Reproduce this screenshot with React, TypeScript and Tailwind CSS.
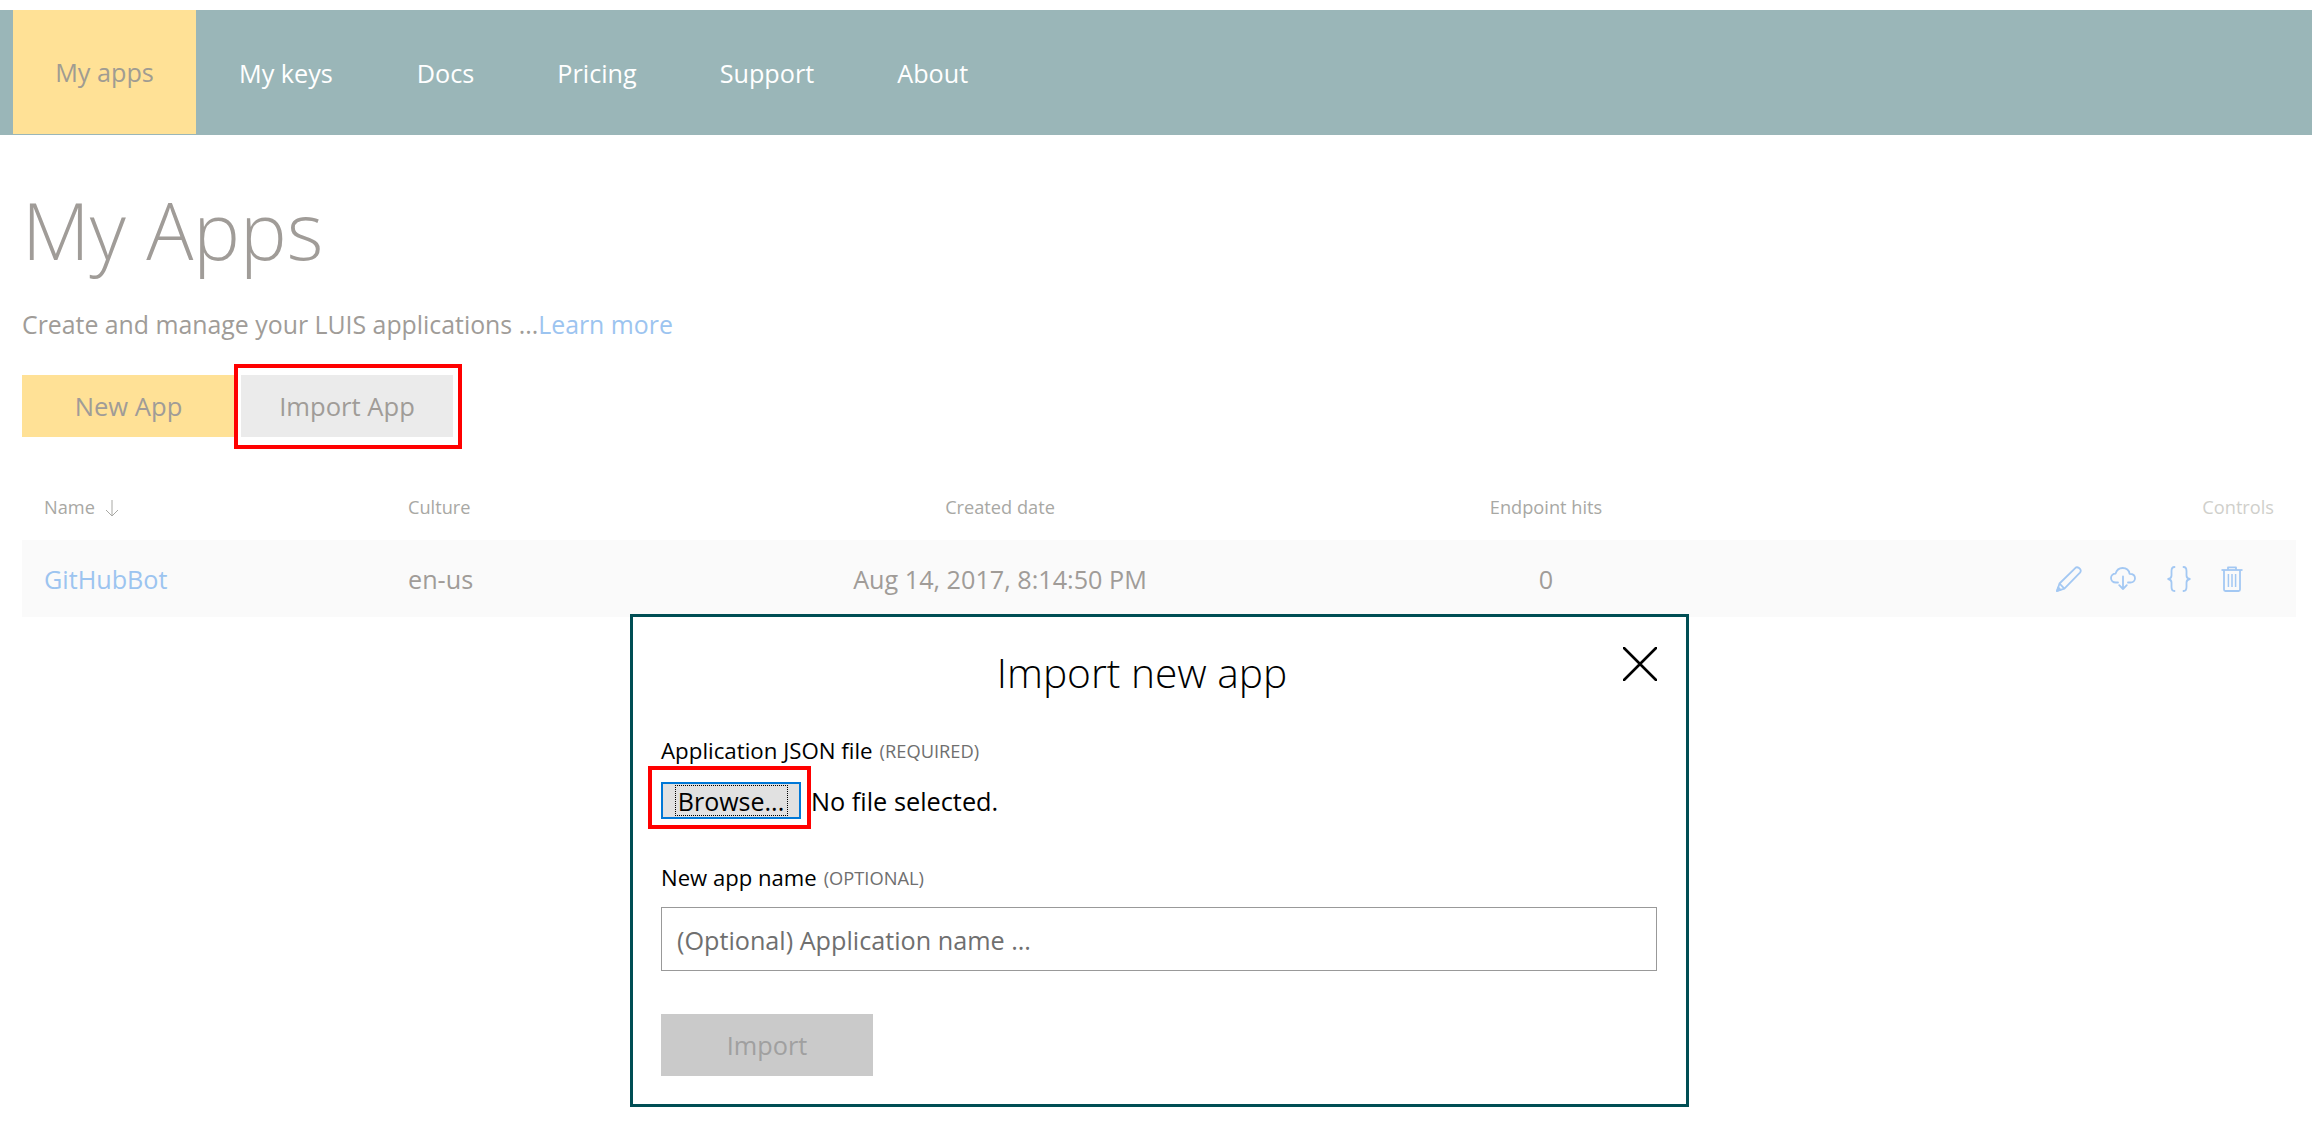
const sans = { fontFamily: '"Open Sans", sans-serif' };

function Pencil() {
  return (
    <svg width="26" height="26" viewBox="0 0 26 26" fill="none" stroke="#a3c8f3" strokeWidth="1.8" strokeLinejoin="round">
      <path d="M1 25 L3.5 17.5 L19.5 1.8 Q21 0.6 23 2 L24.2 3.2 Q25.4 5 24 6.6 L8.4 22.6 Z" />
      <path d="M3.5 17.5 L8.4 22.6" />
      <path d="M1 25 L2.2 21.4 L4.6 23.8 Z" fill="#a3c8f3" />
    </svg>
  );
}
function Cloud() {
  return (
    <svg width="26" height="24" viewBox="0 0 26 24" fill="none" stroke="#a3c8f3" strokeWidth="1.8" strokeLinecap="round" strokeLinejoin="round">
      <path d="M8 15.5 H6 C3 15.5 1 13.6 1 11 C1 8.4 3 6.6 5.6 6.6 C6.6 3.2 9.4 1 12.6 1 C16.2 1 19 3.4 19.6 6.8 C22.6 6.8 25 8.4 25 11.2 C25 13.8 23 15.5 20.4 15.5 H18" />
      <path d="M13 9.5 V22 M9.2 18.2 L13 22 L16.8 18.2" />
    </svg>
  );
}
function Braces() {
  return (
    <svg width="24" height="26" viewBox="0 0 24 26" fill="none" stroke="#a3c8f3" strokeWidth="1.8" strokeLinecap="round" strokeLinejoin="round">
      <path d="M7.5 1 C4.5 1 4.5 3 4.5 5 V9.5 C4.5 11.5 3.5 12.6 1.2 13 C3.5 13.4 4.5 14.5 4.5 16.5 V21 C4.5 23 4.5 25 7.5 25" />
      <path d="M16.5 1 C19.5 1 19.5 3 19.5 5 V9.5 C19.5 11.5 20.5 12.6 22.8 13 C20.5 13.4 19.5 14.5 19.5 16.5 V21 C19.5 23 19.5 25 16.5 25" />
    </svg>
  );
}
function Trash() {
  return (
    <svg width="22" height="26" viewBox="0 0 22 26" fill="none" stroke="#a3c8f3" strokeWidth="1.8" strokeLinejoin="round">
      <path d="M0.5 4 H21.5" />
      <path d="M7 4 V1.4 H15 V4" />
      <path d="M3 4 V23.6 Q3 25 4.4 25 H17.6 Q19 25 19 23.6 V4" />
      <path d="M7.4 8 V21 M11 8 V21 M14.6 8 V21" strokeWidth="1.5" />
    </svg>
  );
}

const columns = "grid grid-cols-[386px_392px_400px_692px_404px] items-center";

export default function App() {
  return (
    <div className="relative h-[1124px] w-[2312px] overflow-hidden bg-white pt-[10px]" style={sans}>
      <nav className="flex h-[125px] items-stretch bg-[#9ab6b8] pl-[13px] text-[25.2px] text-white">
        <a className="mb-[1px] flex w-[183px] items-center justify-center bg-[#ffe196] pt-[2px] text-[#a09c92]">My apps</a>
        <a className="ml-[43px] flex items-center pt-[2px]">My keys</a>
        <a className="ml-[84px] flex items-center pt-[2px]">Docs</a>
        <a className="ml-[83px] flex items-center pt-[2px]">Pricing</a>
        <a className="ml-[83px] flex items-center pt-[2px]">Support</a>
        <a className="ml-[83px] flex items-center pt-[2px]">About</a>
      </nav>

      <main className="px-[16px]">
        <h1 className="ml-[6px] mt-[40px] h-[110px] text-[78.5px] font-light leading-[110px] text-[#a09c98]">My Apps</h1>
        <p className="ml-[6px] mt-[21px] h-[36px] text-[24.85px] leading-[36px] text-[#a09c98]">
          Create and manage your LUIS applications ...<span className="text-[#9cc4f0]">Learn more</span>
        </p>

        <div className="relative ml-[6px] mt-[33px] flex h-[62px] items-stretch text-[25.6px] text-[#a09c98]">
          <button className="w-[213px] bg-[#ffe196] pt-[2px]">New App</button>
          <button className="ml-[6px] w-[212px] bg-[#ebebeb] pt-[2px]">Import App</button>
          <div className="absolute left-[212px] top-[-11px] h-[85px] w-[228px] border-4 border-[#ff0000]" />
        </div>

        <div className={`ml-[6px] mt-[56px] h-[30px] w-[2274px] text-[18.2px] text-[#a8a8a4] ${columns}`}>
          <div className="flex items-center gap-[10px] pl-[22px]">
            Name
            <svg width="14" height="18" viewBox="0 0 14 18" fill="none" stroke="#a8a8a4" strokeWidth="1">
              <path d="M7 1 V17 M1 11 L7 17 L13 11" />
            </svg>
          </div>
          <div>Culture</div>
          <div className="text-center">Created date</div>
          <div className="text-center">Endpoint hits</div>
          <div className="pr-[22px] text-right text-[#cfcfcb]">Controls</div>
        </div>

        <div className={`ml-[6px] mt-[17px] h-[77px] w-[2274px] bg-[#fafafa] pt-[2px] text-[25.2px] text-[#a09c98] ${columns}`}>
          <div className="pl-[22px] text-[#9cc4f0]">GitHubBot</div>
          <div>en-us</div>
          <div className="text-center">Aug 14, 2017, 8:14:50 PM</div>
          <div className="text-center">0</div>
          <div className="mb-[2px] flex items-center justify-end pr-[53px]">
            <Pencil />
            <div className="ml-[28px]"><Cloud /></div>
            <div className="ml-[31px]"><Braces /></div>
            <div className="ml-[30px]"><Trash /></div>
          </div>
        </div>
      </main>

      <div role="dialog" className="absolute left-[630px] top-[614px] h-[493px] w-[1059px] border-[3px] border-[#004e54] bg-white pl-[28px] pr-[29px] pt-[30px] text-black">
        <div className="flex items-start">
          <h2 className="mt-[-1px] mb-[1px] h-[52px] flex-1 text-center text-[40.7px] font-light leading-[52px]">Import new app</h2>
          <svg width="34" height="34" viewBox="0 0 34 34" stroke="#000" strokeWidth="2.6" strokeLinecap="round">
            <path d="M1 1 L33 33 M33 1 L1 33" />
          </svg>
        </div>

        <div className="mt-[37px] flex h-[30px] items-center text-[22.3px]">
          Application JSON file
          <span className="ml-[7px] text-[18.3px] text-[#6f6f6f]">(REQUIRED)</span>
        </div>

        <div className="relative mt-[16px] flex h-[37px] items-center">
          <button className="flex h-[37px] w-[140px] items-center justify-center border-2 border-[#0078d7] bg-[#e1e1e1] py-[1px] text-[25px]">
            <span className="flex h-full w-[113px] items-center justify-center border border-dotted border-black pt-[2px]">Browse...</span>
          </button>
          <span className="ml-[10px] pt-[2px] text-[25.3px]">No file selected.</span>
          <div className="absolute left-[-13px] top-[-16px] h-[63px] w-[163px] border-4 border-[#ff0000]" />
        </div>

        <div className="mt-[44px] flex h-[30px] items-center text-[22.1px]">
          New app name
          <span className="ml-[7px] text-[18.3px] text-[#6f6f6f]">(OPTIONAL)</span>
        </div>

        <input
          readOnly
          placeholder="(Optional) Application name ..."
          className="mt-[14px] block h-[64px] w-full border border-[#999999] px-[15px] pt-[2px] text-[25.2px] outline-none placeholder:text-[#6f6f6f]"
        />

        <button className="mt-[43px] h-[62px] w-[212px] bg-[#cacaca] pt-[2px] text-[25.3px] text-[#a0a0a0]">Import</button>
      </div>
    </div>
  );
}
